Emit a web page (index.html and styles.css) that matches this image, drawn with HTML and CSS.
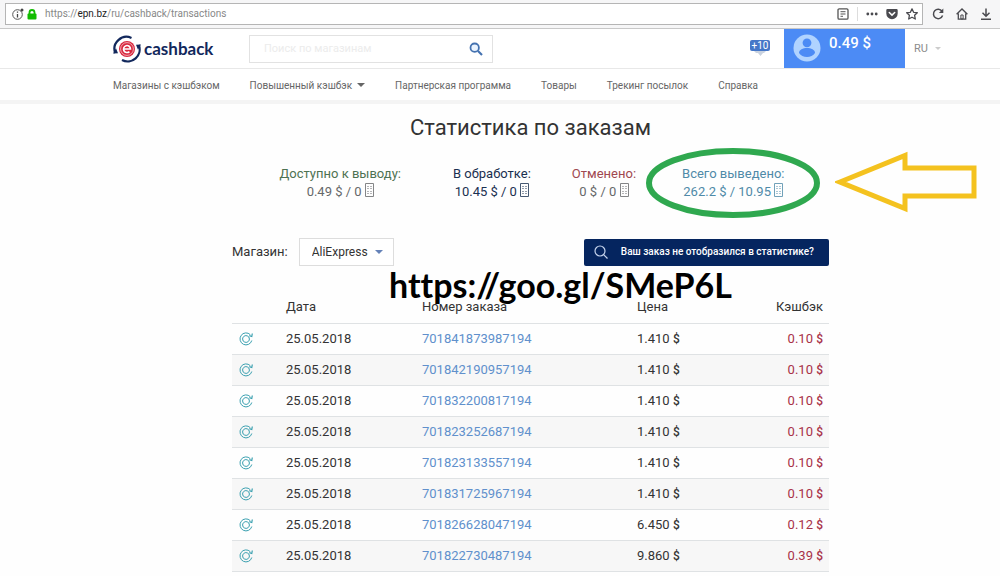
FILE: index.html
```html
<!DOCTYPE html>
<html lang="ru">
<head>
<meta charset="utf-8">
<title>Статистика по заказам</title>
<link rel="stylesheet" href="styles.css">
</head>
<body>
<svg class="defs" aria-hidden="true">
  <symbol id="tofu" viewBox="0 0 9 14"><path d="M.5.5h8v13h-8z" fill="none" stroke="currentColor"/><path d="M2 3.500h2M5 3.500h2M2 5.500h2M5 5.500h2M2 8.500h2M5 8.500h2M2 10.500h2M5 10.500h2" fill="none" stroke="currentColor" stroke-opacity=".6"/></symbol>
  <symbol id="sync" viewBox="0 0 14 14"><g fill="none" stroke="currentColor"><path d="M11.300 2.700A6 6 0 1 0 12.800 8.500"/><path d="M13.300 1.500L12.800 4.500L10.300 3.600" stroke-width="1.200"/><path d="M4.400 4.800A3.400 3.400 0 0 1 10.400 7M9.600 9.200A3.400 3.400 0 0 1 3.600 7M4.400 4.800A3.400 3.400 0 0 0 3.600 7M10.400 7A3.400 3.400 0 0 1 9.600 9.200"/></g></symbol>
</svg>

<div class="browser">
  <div class="urlbar">
    <svg class="ic-info" viewBox="0 0 12 12"><circle cx="5.500" cy="6.500" r="4.800" fill="none" stroke="#555"/><path d="M5.500 6v3.500M5.500 3.500v1.300" stroke="#444" stroke-width="1.300"/><circle cx="10" cy="2" r="1.500" fill="#444"/></svg>
    <svg class="ic-lock" viewBox="0 0 10 11"><path d="M2.500 5V3.500a2.500 2.500 0 0 1 5 0V5" fill="none" stroke="#12bc00" stroke-width="1.800"/><rect x=".5" y="4.500" width="9" height="6" rx="1" fill="#12bc00"/></svg>
    <span class="address">https://<b>epn.bz</b>/ru/cashback/transactions</span>
    <svg class="ic-reader" viewBox="0 0 12 12"><rect x="1" y=".8" width="10" height="10.400" rx="1.200" fill="none" stroke="#555" stroke-width="1.300"/><path d="M3.500 3.700h5M3.500 6h5M3.500 8.300h2.500" stroke="#555"/></svg>
    <span class="split"></span>
    <svg class="ic-dots" viewBox="0 0 12 12"><g fill="#4a4a4f"><circle cx="1.800" cy="6" r="1.400"/><circle cx="6" cy="6" r="1.400"/><circle cx="10.200" cy="6" r="1.400"/></g></svg>
    <svg class="ic-tool" viewBox="0 0 12 12"><path d="M1.500 1h9A1.200 1.200 0 0 1 11.700 2.200V5.500a5.700 5.700 0 0 1-11.400 0V2.200A1.200 1.200 0 0 1 1.500 1z" fill="#4a4a4f"/><path d="M3.300 4.500L6 7.100l2.700-2.600" fill="none" stroke="#fff" stroke-width="1.500" stroke-linecap="round"/></svg>
    <svg class="ic-tool" viewBox="0 0 12 12"><path d="M6 .9l1.600 3.400 3.700.4-2.700 2.600.7 3.700L6 9.200 2.700 11l.7-3.700L.7 4.700l3.700-.4z" fill="none" stroke="#4a4a4f" stroke-width="1.300" stroke-linejoin="round"/></svg>
  </div>
  <svg class="ic-tool" viewBox="0 0 12 12"><path d="M10 3.200A4.700 4.700 0 1 0 10.600 7.500" fill="none" stroke="#4a4a4f" stroke-width="1.500"/><path d="M11.300.6v4.400H6.900z" fill="#4a4a4f"/></svg>
  <svg class="ic-tool" viewBox="0 0 12 12"><path d="M.6 6.200L6 1l5.400 5.200M2.300 5.500v5.700h7.400V5.500" fill="none" stroke="#4a4a4f" stroke-width="1.300"/><path d="M4.900 7h2.200v4H4.900z" fill="none" stroke="#4a4a4f"/></svg>
  <svg class="ic-tool" viewBox="0 0 12 12"><path d="M6 .5v7.500M2.500 4.800L6 8.300l3.500-3.500M1 11.200h10" fill="none" stroke="#4a4a4f" stroke-width="1.500"/></svg>
</div>

<header class="top">
  <a class="logo" href="#">
    <svg viewBox="0 0 28 28"><circle cx="14" cy="14" r="8" fill="#d8283e"/><g fill="none" stroke="#12285c" stroke-width="2.200"><path d="M2.200 18A12 12 0 0 1 18.500 3"/><path d="M25.800 10A12 12 0 0 1 9 25"/></g><path d="M0 18.500l5-.3-2-5zM28 9.500l-5 .3 2 5z" fill="#12285c"/><circle cx="14" cy="14" r="6.400" fill="none" stroke="#fff" stroke-width=".6"/><path d="M10.500 14h7a3.500 3.500 0 1 0-1.100 2.600" fill="none" stroke="#fff" stroke-width="1.600"/></svg>
    <span>cashback</span>
  </a>
  <form class="search">
    <input type="search" aria-label="Поиск по магазинам" placeholder="Поиск по магазинам">
    <button type="button" aria-label="Найти"><svg viewBox="0 0 14 14"><circle cx="5.700" cy="5.700" r="4.200" fill="#eaf4ff" stroke="#4472b0" stroke-width="1.800"/><path d="M9 9l4 4" stroke="#4472b0" stroke-width="2.200"/></svg></button>
  </form>
  <div class="bonus"><span>+10</span><svg viewBox="0 0 14 5"><path d="M1 0h12l-2 2H3zM5 2h5L7.500 5z" fill="#c9d2df"/></svg></div>
  <a class="account" href="#">
    <svg viewBox="0 0 28 28"><circle cx="14" cy="14" r="13.500" fill="#b0d3ff"/><circle cx="14" cy="8.800" r="4.400" fill="#4c8bf5"/><path d="M6 19c0-3.500 4-5 8-5s8 1.500 8 5c-1.700 2.500-4.700 4-8 4s-6.300-1.500-8-4z" fill="#4c8bf5"/></svg>
    <span>0.49 $</span>
  </a>
  <button class="lang" type="button">RU<i class="caret"></i></button>
</header>

<nav class="menu">
  <a href="#">Магазины с кэшбэком</a>
  <a href="#">Повышенный кэшбэк<i class="caret"></i></a>
  <a href="#">Партнерская программа</a>
  <a href="#">Товары</a>
  <a href="#">Трекинг посылок</a>
  <a href="#">Справка</a>
</nav>

<main>
  <h1>Статистика по заказам</h1>
  <section class="stats">
    <div class="stat ready"><span>Доступно к выводу:</span><span>0.49 $ / 0 <svg class="tofu"><use href="#tofu"/></svg></span></div>
    <div class="stat pending"><span>В обработке:</span><span>10.45 $ / 0 <svg class="tofu"><use href="#tofu"/></svg></span></div>
    <div class="stat cancelled"><span>Отменено:</span><span>0 $ / 0 <svg class="tofu"><use href="#tofu"/></svg></span></div>
    <div class="stat paid"><span>Всего выведено:</span><span>262.2 $ / 10.95 <svg class="tofu"><use href="#tofu"/></svg></span>
      <svg class="ring" viewBox="0 0 174 70"><ellipse cx="87" cy="35" rx="84" ry="32" fill="none" stroke="#2fa84f" stroke-width="6"/></svg>
      <svg class="arrow" viewBox="0 0 144 62"><path d="M5 31L70 4.500V17h69v28H70v12.500z" fill="none" stroke="#f4c21f" stroke-width="5"/></svg>
    </div>
  </section>

  <section class="orders">
    <div class="filter">
      <label for="shop">Магазин:</label>
      <div class="pick"><select id="shop"><option>AliExpress</option></select><i class="caret"></i></div>
      <button class="missing" type="button"><svg viewBox="0 0 14 14"><circle cx="6" cy="6" r="5" fill="none" stroke="#c5d3ec" stroke-width="1.200"/><path d="M9.600 9.600L13.500 13.500" stroke="#c5d3ec" stroke-width="1.200"/></svg>Ваш заказ не отобразился в статистике?</button>
    </div>
    <div class="watermark">https://goo.gl/SMeP6L</div>
    <table>
      <thead><tr><th class="c-icon"></th><th class="c-date">Дата</th><th class="c-num">Номер заказа</th><th class="c-price">Цена</th><th class="c-back">Кэшбэк</th></tr></thead>
      <tbody>
        <tr><td><svg class="sync"><use href="#sync"/></svg></td><td>25.05.2018</td><td><a href="#">701841873987194</a></td><td>1.410 <b>$</b></td><td>0.10 <b>$</b></td></tr>
        <tr><td><svg class="sync"><use href="#sync"/></svg></td><td>25.05.2018</td><td><a href="#">701842190957194</a></td><td>1.410 <b>$</b></td><td>0.10 <b>$</b></td></tr>
        <tr><td><svg class="sync"><use href="#sync"/></svg></td><td>25.05.2018</td><td><a href="#">701832200817194</a></td><td>1.410 <b>$</b></td><td>0.10 <b>$</b></td></tr>
        <tr><td><svg class="sync"><use href="#sync"/></svg></td><td>25.05.2018</td><td><a href="#">701823252687194</a></td><td>1.410 <b>$</b></td><td>0.10 <b>$</b></td></tr>
        <tr><td><svg class="sync"><use href="#sync"/></svg></td><td>25.05.2018</td><td><a href="#">701823133557194</a></td><td>1.410 <b>$</b></td><td>0.10 <b>$</b></td></tr>
        <tr><td><svg class="sync"><use href="#sync"/></svg></td><td>25.05.2018</td><td><a href="#">701831725967194</a></td><td>1.410 <b>$</b></td><td>0.10 <b>$</b></td></tr>
        <tr><td><svg class="sync"><use href="#sync"/></svg></td><td>25.05.2018</td><td><a href="#">701826628047194</a></td><td>6.450 <b>$</b></td><td>0.12 <b>$</b></td></tr>
        <tr><td><svg class="sync"><use href="#sync"/></svg></td><td>25.05.2018</td><td><a href="#">701822730487194</a></td><td>9.860 <b>$</b></td><td>0.39 <b>$</b></td></tr>
      </tbody>
    </table>
  </section>
</main>
</body>
</html>
```

FILE: styles.css
```css
* { box-sizing: border-box; }
body { margin: 0; background: #fefefe; color: #333; font: 13px/18px Roboto, sans-serif; }
a { color: inherit; text-decoration: none; }
button, input, select { font: inherit; color: inherit; margin: 0; padding: 0; border: 0; background: none; }
svg { flex: none; }
.defs { position: absolute; width: 0; height: 0; }
.caret { display: inline-block; flex: none; border: 4px solid transparent; border-top-color: currentColor; border-bottom: 0; }

/* Browser toolbar */
.browser { display: flex; align-items: center; gap: 12px; height: 29px; padding: 0 8px 0 5px; background: #f6f6f7; border-bottom: 1px solid #c8c8c8; }
.urlbar { flex: 1; display: flex; align-items: center; gap: 8px; height: 22px; margin-right: -3px; padding: 0 4px 0 6px; background: #fff; border: 1px solid #b5b5b5; }
.address { flex: 1; color: #888; font: 10px/20px Roboto, sans-serif; }
.address b { color: #222; font-weight: 400; }
.ic-info, .ic-reader, .ic-dots, .ic-tool { width: 12px; height: 12px; }
.ic-info { margin-right: -5px; }
.ic-lock { width: 10px; height: 11px; }
.split { width: 1px; height: 14px; background: #ddd; }

/* Site header */
.top { display: flex; height: 40px; padding-left: 113px; background: #fff; border-bottom: 1px solid #e8e8e8; }
.logo { display: flex; align-items: center; gap: 3px; width: 136px; color: #12285c; font: 700 17px/24px Lato, sans-serif; }
.logo svg { width: 28px; height: 28px; }
.search { display: flex; align-items: center; align-self: center; width: 244px; height: 28px; padding: 0 9px 0 14px; border: 1px solid #e2e2e2; }
.search input { flex: 1; min-width: 0; outline: 0; font-size: 11px; }
.search input::placeholder { color: #ececec; opacity: 1; }
.search svg { display: block; width: 14px; height: 14px; }
.bonus { display: flex; flex-direction: column; align-items: center; margin: 11px 14px 0 auto; }
.bonus span { width: 20px; background: #4577c8; border-radius: 2px; color: #fff; font: 10px/11px Roboto, sans-serif; text-align: center; }
.bonus svg { width: 14px; height: 5px; }
.account { display: flex; gap: 8px; width: 121px; padding: 5px 9px; background: #4c8bf5; color: #fff; font: 500 15px/18px Roboto, sans-serif; }
.account svg { width: 28px; height: 28px; }
.lang { display: flex; align-items: center; gap: 7px; width: 95px; padding-left: 9px; color: #8c8c8c; font-size: 11px; }
.lang .caret { border-width: 3px 3px 0; color: #ccc; }

.menu { display: flex; gap: 30px; height: 35px; padding-left: 113px; background: #fff; border-bottom: 4px solid #f4f4f4; color: #666; font-size: 10px; line-height: 33px; }
.menu .caret { margin: 0 0 2px 5px; }

/* Statistics */
main { padding: 12px 52px 0 113px; }
h1 { margin: 0; font: 400 22px/24px Roboto, sans-serif; text-align: center; }
.stats { display: flex; justify-content: center; gap: 41px; margin-top: 25px; padding-left: 3px; }
.stat { position: relative; display: flex; flex-direction: column; align-items: center; white-space: nowrap; }
.tofu { width: 9px; height: 14px; vertical-align: -1px; opacity: .8; }
.ready { margin-right: 11px; color: #4e7252; }
.pending { color: #1a3050; }
.cancelled { color: #a04850; }
.paid { margin-left: 5px; color: #4f8aa8; }
.ready span + span, .cancelled span + span { color: #66686a; }
.ring { position: absolute; left: -36px; top: -17px; width: 174px; height: 70px; }
.arrow { position: absolute; left: 153px; top: -14px; width: 144px; height: 62px; }

/* Orders */
.orders { position: relative; max-width: 597px; margin: 37px auto 0; }
.filter { display: flex; align-items: center; gap: 11px; }
.pick { position: relative; }
.pick select { display: block; width: 95px; height: 28px; padding-left: 12px; appearance: none; background: #fff; border: 1px solid #ddd; font-size: 12px; }
.pick .caret { position: absolute; right: 11px; top: 12px; color: #6582b8; pointer-events: none; }
.missing { display: flex; align-items: center; gap: 13px; height: 27px; margin-left: auto; padding: 0 15px 0 10px; background: #05255f; border-radius: 2px; color: #fff; font-size: 10px; font-weight: 500; }
.missing svg { width: 14px; height: 14px; }
.watermark { position: absolute; left: 157px; top: 26px; color: #000; font: 700 34px/42px Lato, sans-serif; font-variant-ligatures: none; white-space: nowrap; }
table { width: 100%; margin-top: 26px; border-collapse: collapse; table-layout: fixed; }
th, td { height: 31px; padding: 0; border-bottom: 1px solid #dfe2e4; font-weight: 400; line-height: 18px; text-align: left; }
.c-icon { width: 54px; }
.c-date { width: 136px; }
.c-num { width: 215px; }
.c-price { width: 100px; }
th:last-child, td:last-child { padding-right: 6px; text-align: right; }
td:last-child { color: #a83248; }
td:first-child { padding-left: 7px; }
td a { color: #6090cc; }
td b { font-size: 12px; font-weight: 500; }
tbody tr:nth-child(even) { background: #f7f7f7; }
.sync { display: block; width: 14px; height: 14px; color: #3aa0b0; }
```
